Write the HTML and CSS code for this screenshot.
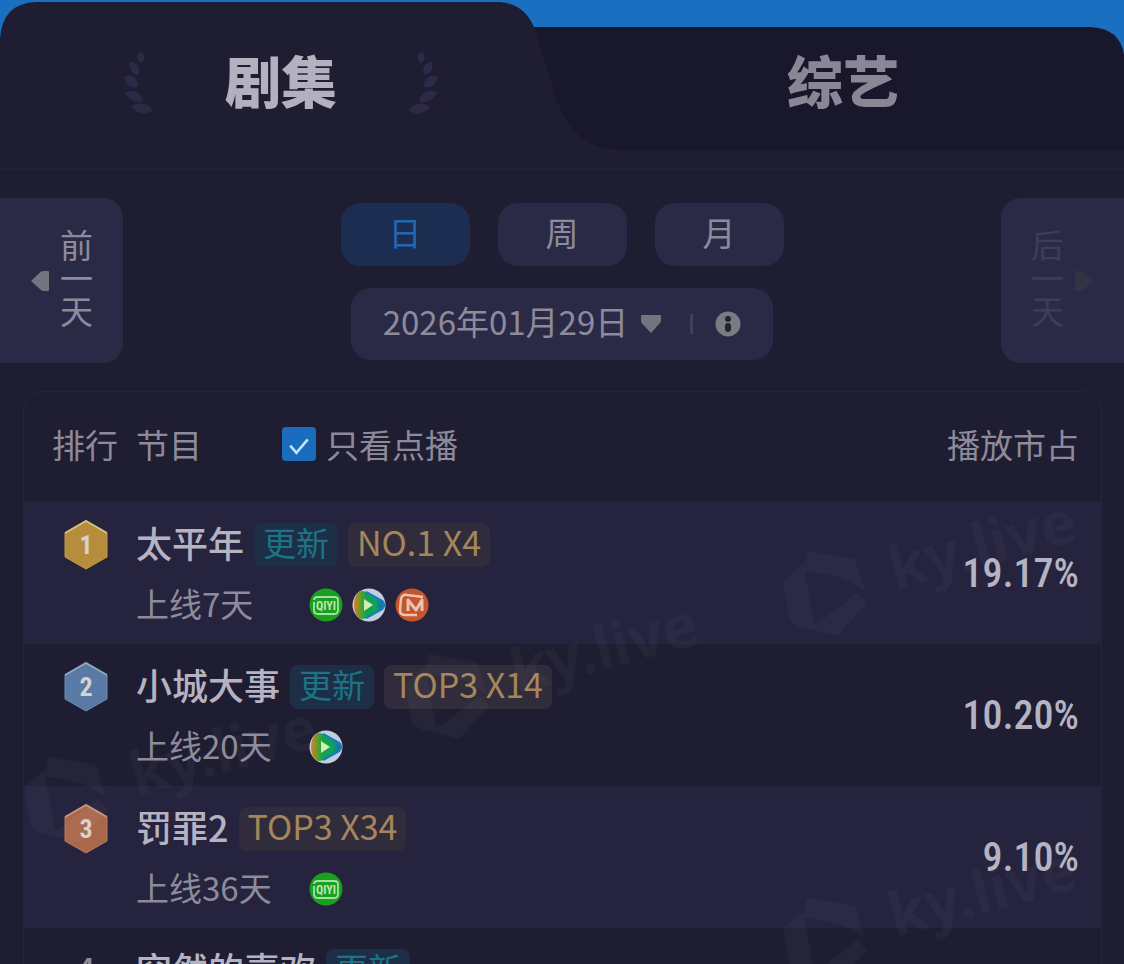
FILE: index.html
```html
<!DOCTYPE html>
<html lang="zh-CN">
<head>
  <meta charset="UTF-8">
  <meta name="viewport" content="width=device-width, initial-scale=1.0">
  <title>播放市占</title>
  <link rel="stylesheet" href="styles.css">
</head>
<body>

  <!-- Shared icons -->
  <svg class="sprite" aria-hidden="true">
    <defs>
      <linearGradient id="playFill" x1="0" x2="1" y1="0" y2="0">
        <stop offset="0" stop-color="#e07a20"/>
        <stop offset="0.22" stop-color="#5f9f2a"/>
        <stop offset="0.4" stop-color="#12a24a"/>
        <stop offset="0.7" stop-color="#12a25a"/>
        <stop offset="1" stop-color="#1668b4"/>
      </linearGradient>
    </defs>
    <symbol id="laurel" viewBox="0 0 32 66">
      <g fill="#2c2a47">
        <path d="M0-6Q6-3 4 2Q3 6 1 6Q-6 2 0-6Z" transform="translate(17 8)"/>
        <path d="M-1-8Q7-4 4 3Q3 7 1 7Q-7 1-1-8Z" transform="translate(11 20) rotate(-22)"/>
        <path d="M-1-9Q8-4 5 4Q3 8 1 8Q-8 2-1-9Z" transform="translate(8 33) rotate(-44)"/>
        <path d="M-1-10Q8-4 5 4Q3 9 1 10Q-8 3-1-10Z" transform="translate(11 48) rotate(-60)"/>
        <path d="M-1-11Q8-4 5 5Q3 10 1 11Q-8 3-1-11Z" transform="translate(19 60) rotate(-74)"/>
      </g>
    </symbol>
    <symbol id="iqiyi" viewBox="0 0 34 34">
      <circle cx="17" cy="17" r="16.5" fill="#1aa01f"/>
      <path d="M5 12Q5 9 9 9H25Q29 9 29 12V22Q29 26 25 26H9Q5 26 5 22M5 14V22" fill="none" stroke="#a5dfa3" stroke-width="1.8"/>
      <text class="iqiyi-text" x="17" y="22">QIYI</text>
    </symbol>
    <symbol id="tencent" viewBox="0 0 34 34">
      <circle cx="17" cy="17" r="16.5" fill="#c3cfdf"/>
      <path d="M7 4Q10 2 14 4L30 13Q34 17 30 21L14 30Q10 32 7 30Q2 26 2 17Q2 8 7 4Z" fill="url(#playFill)"/>
      <path d="M14 4L30 13Q34 17 30 21L14 30" fill="none" stroke="#187cc0" stroke-width="2.5"/>
      <path d="M12 11L21 17L12 23Z" fill="#d3ecb0"/>
    </symbol>
    <symbol id="mango" viewBox="0 0 34 34">
      <circle cx="17" cy="17" r="16.5" fill="#c4562a"/>
      <path d="M28 9L12 7Q7 6 6 11L5 22Q5 27 10 27H22" fill="none" stroke="#e9c4b4" stroke-width="2.5"/>
      <path d="M13 23V12L21 22L27 12V23" fill="none" stroke="#e9c4b4" stroke-width="3" stroke-linejoin="round"/>
    </symbol>
    <symbol id="watermark" viewBox="0 0 310 130" overflow="visible">
      <path d="M24 35L72 43L82 75L60 62L20 54Z"/>
      <path d="M20 48L0 65L7 105L18 112L31 108L22 58Z"/>
      <path d="M74 77L84 87L54 120L20 111L37 106L70 80Z"/>
      <text x="112" y="74" transform="rotate(-15 112 74)">ky.live</text>
    </symbol>
  </svg>

  <header class="tabs">
    <svg class="tabs-bg" viewBox="0 0 1124 168" preserveAspectRatio="none" aria-hidden="true">
      <path d="M500 27H1090Q1120 28 1124 55V160H500Z" fill="#19172b"/>
      <path d="M0 38Q3 3 36 2H500Q524 4 534 27L557 101Q573 149 622 150H1124V168H0Z" fill="#1f1d31"/>
    </svg>
    <button class="tab active">
      <svg class="laurel" aria-hidden="true"><use href="#laurel"/></svg>
      <span>剧集</span>
      <svg class="laurel flip" aria-hidden="true"><use href="#laurel"/></svg>
    </button>
    <button class="tab"><span>综艺</span></button>
  </header>

  <main>
    <section class="controls">
      <button class="day prev">
        <svg width="20" height="22" viewBox="0 0 20 22" aria-hidden="true"><path d="M1 11L11 1.5Q12 1 14 1H18Q19 1 19 2V20Q19 21 18 21H14Q12 21 11 20Z" fill="#74747f"/></svg>
        <span>前一天</span>
      </button>

      <div class="picker">
        <div class="periods">
          <button class="period selected">日</button>
          <button class="period">周</button>
          <button class="period">月</button>
        </div>
        <div class="date-bar">
          <button class="date">
            <span>2026年01月29日</span>
            <svg width="22" height="20" viewBox="0 0 22 20" aria-hidden="true"><path d="M11 19L1.5 9Q1 8 1 6V2Q1 1 2 1H20Q21 1 21 2V6Q21 8 20 9Z" fill="#74747f"/></svg>
          </button>
          <span class="divider"></span>
          <button class="info" aria-label="说明">
            <svg width="26" height="26" viewBox="0 0 26 26" aria-hidden="true"><circle cx="13" cy="13" r="12.5" fill="#7b7b82"/><circle cx="13" cy="8" r="3" fill="#24242c"/><rect x="10" y="12" width="6" height="9" rx="3" fill="#24242c"/></svg>
          </button>
        </div>
      </div>

      <button class="day next" disabled>
        <span>后一天</span>
        <svg width="20" height="22" viewBox="0 0 20 22" aria-hidden="true"><path d="M19 11L9 1.5Q8 1 6 1H2Q1 1 1 2V20Q1 21 2 21H6Q8 21 9 20Z" fill="#323344"/></svg>
      </button>
    </section>

    <section class="board">
      <table>
        <thead>
          <tr>
            <th class="rank">排行</th>
            <th class="show">
              <div class="show-head">
                <span>节目</span>
                <label class="only"><input type="checkbox" checked><span>只看点播</span></label>
              </div>
            </th>
            <th class="share">播放市占</th>
          </tr>
        </thead>
        <tbody>
          <tr>
            <td class="rank">
              <svg class="badge" viewBox="0 0 44 50"><path d="M22 1L43 13V37L22 49L1 37V13Z" fill="#b58d3c" stroke="#c39c4a" stroke-width="1"/><path d="M1 13L22 1L43 13" fill="none" stroke="#d8c080" stroke-width="2"/><text x="22" y="34">1</text></svg>
            </td>
            <td class="show">
              <div class="title"><span class="name">太平年</span><span class="tag new">更新</span><span class="tag top">NO.1 X4</span></div>
              <div class="meta"><span class="days">上线7天</span><svg class="site"><use href="#iqiyi"/></svg><svg class="site"><use href="#tencent"/></svg><svg class="site"><use href="#mango"/></svg></div>
            </td>
            <td class="share">19.17%</td>
          </tr>
          <tr>
            <td class="rank">
              <svg class="badge" viewBox="0 0 44 50"><path d="M22 1L43 13V37L22 49L1 37V13Z" fill="#587aa5" stroke="#6c8db5" stroke-width="1"/><path d="M1 13L22 1L43 13" fill="none" stroke="#8fa6c4" stroke-width="2"/><text x="22" y="34">2</text></svg>
            </td>
            <td class="show">
              <div class="title"><span class="name">小城大事</span><span class="tag new">更新</span><span class="tag top">TOP3 X14</span></div>
              <div class="meta"><span class="days">上线20天</span><svg class="site"><use href="#tencent"/></svg></div>
            </td>
            <td class="share">10.20%</td>
          </tr>
          <tr>
            <td class="rank">
              <svg class="badge" viewBox="0 0 44 50"><path d="M22 1L43 13V37L22 49L1 37V13Z" fill="#a9684c" stroke="#b97b5d" stroke-width="1"/><path d="M1 13L22 1L43 13" fill="none" stroke="#c8937a" stroke-width="2"/><text x="22" y="34">3</text></svg>
            </td>
            <td class="show">
              <div class="title"><span class="name">罚罪2</span><span class="tag top">TOP3 X34</span></div>
              <div class="meta"><span class="days">上线36天</span><svg class="site"><use href="#iqiyi"/></svg></div>
            </td>
            <td class="share">9.10%</td>
          </tr>
          <tr>
            <td class="rank"><span class="number">4</span></td>
            <td class="show">
              <div class="title"><span class="name">突然的喜欢</span><span class="tag new">更新</span></div>
              <div class="meta"></div>
            </td>
            <td class="share"></td>
          </tr>
        </tbody>
      </table>

      <svg class="marks" aria-hidden="true">
        <use href="#watermark" x="0" y="330" width="310" height="130"/>
        <use href="#watermark" x="381" y="227" width="310" height="130"/>
        <use href="#watermark" x="759" y="124" width="310" height="130"/>
        <use href="#watermark" x="759" y="471" width="310" height="130"/>
      </svg>
    </section>
  </main>

</body>
</html>
```

FILE: styles.css
```css
* {
  box-sizing: border-box;
}

body {
  font-family: "Noto Sans CJK SC", sans-serif;
  font-size: 33px;
  margin: 0;
  height: 100vh;
  overflow: hidden;
  background-color: #1f1d31;
  color: #8d8b9b;
}

button {
  font: inherit;
  color: inherit;
  background: none;
  border: none;
  padding: 0;
  cursor: pointer;
}

.sprite {
  position: absolute;
  width: 0;
  height: 0;
}

/* Tabs */
.tabs {
  position: relative;
  display: grid;
  grid-template-columns: 1fr 1fr;
  height: 169px;
  background-color: #1a6fc0;
  border-bottom: 1px solid #242239;
}

.tabs-bg {
  position: absolute;
  top: 0;
  left: 0;
  width: 100%;
  height: 100%;
}

.tab {
  position: relative;
  display: flex;
  align-items: center;
  justify-content: center;
  gap: 70px;
  padding-bottom: 4px;
  font-size: 56px;
  font-weight: 900;
  line-height: 64px;
  color: #898796;
}

.tab span {
  padding-bottom: 6px;
}

.tab.active {
  color: #b3b1bf;
}

.laurel {
  width: 32px;
  height: 66px;
}

.laurel.flip {
  transform: scaleX(-1);
}

/* Day, period and date controls */
.controls {
  display: flex;
  justify-content: space-between;
  align-items: flex-start;
  padding-top: 29px;
}

.day {
  display: flex;
  align-items: center;
  gap: 10px;
  width: 123px;
  height: 165px;
  padding: 0 30px;
  background-color: #2b2a46;
}

.day span {
  width: 33px;
  padding-bottom: 6px;
  line-height: 33px;
}

.day svg {
  flex: none;
}

.prev {
  border-radius: 0 20px 20px 0;
}

.next {
  border-radius: 20px 0 0 20px;
  color: #3e3c58;
}

.picker {
  display: flex;
  flex-direction: column;
  align-items: center;
  gap: 22px;
  padding-top: 5px;
}

.periods {
  display: flex;
  gap: 28px;
}

.period {
  width: 129px;
  height: 63px;
  padding-bottom: 6px;
  border-radius: 20px;
  background-color: #2b2a46;
  line-height: 56px;
}

.period.selected {
  background-color: #1d2d52;
  color: #2068b0;
}

.date-bar {
  display: flex;
  align-items: center;
  height: 72px;
  padding: 0 32px;
  border-radius: 20px;
  background-color: #2b2a46;
}

.date {
  display: flex;
  align-items: center;
  gap: 12px;
  line-height: 44px;
}

.date span {
  padding-bottom: 6px;
}

.divider {
  width: 3px;
  height: 20px;
  margin: 0 22px 0 28px;
  background-color: #403f5a;
}

.info {
  display: flex;
}

/* Ranking */
.board {
  position: relative;
  margin: 28px 22px 0 23px;
  border: 1px solid #262439;
  border-radius: 20px;
  overflow: hidden;
}

table {
  width: 100%;
  border-collapse: collapse;
}

th {
  height: 110px;
  padding: 0 0 6px;
  font-weight: 400;
  text-align: left;
}

td {
  height: 142px;
  padding: 21px 0 0;
  vertical-align: top;
}

tbody tr:nth-child(odd) {
  background-color: #25233e;
}

th.rank {
  width: 112px;
  padding-left: 28px;
}

td.rank {
  padding: 18px 0 0 40px;
}

.badge {
  display: block;
  width: 44px;
  height: 50px;
}

.badge text {
  font: bold 26px "Roboto Condensed", Roboto, sans-serif;
  fill: #d6d2d0;
  text-anchor: middle;
}

.iqiyi-text {
  font: bold 12px "Roboto Condensed", Roboto, sans-serif;
  fill: #b9e6b5;
  text-anchor: middle;
}

.number {
  display: block;
  width: 44px;
  font-size: 33px;
  font-weight: 500;
  line-height: 44px;
  text-align: center;
}

.show-head {
  display: flex;
  align-items: center;
  gap: 80px;
}

.only {
  display: flex;
  align-items: center;
  gap: 10px;
}

.only input {
  appearance: none;
  width: 34px;
  height: 34px;
  margin: 0;
  border-radius: 4px;
  background: #1a6dbc url("data:image/svg+xml,%3Csvg xmlns='http://www.w3.org/2000/svg' viewBox='0 0 33 33'%3E%3Cpath d='M8 18l6 7 11-13' fill='none' stroke='%23c5e4ff' stroke-width='2.5'/%3E%3C/svg%3E");
}

.title {
  display: flex;
  align-items: center;
  gap: 10px;
  height: 44px;
}

.name {
  padding-bottom: 6px;
  font-size: 36px;
  font-weight: 500;
  line-height: 44px;
  color: #b5b3c2;
}

.tag {
  height: 44px;
  padding: 0 9px;
  border-radius: 8px;
  line-height: 38px;
}

.tag.new {
  background-color: #1d2f47;
  color: #1c7386;
}

.tag.top {
  background-color: #312c3c;
  font-size: 34px;
  color: #a4865a;
}

.meta {
  display: flex;
  align-items: center;
  gap: 9px;
  height: 44px;
  margin-top: 16px;
}

.days {
  width: 164px;
  padding-bottom: 4px;
  line-height: 44px;
}

.site {
  width: 34px;
  height: 34px;
}

.share {
  padding-right: 22px;
  text-align: right;
}

td.share {
  padding-top: 0;
  font-family: "Roboto Condensed", Roboto, sans-serif;
  font-size: 40px;
  font-weight: 500;
  vertical-align: middle;
  color: #b5b3c2;
}

.marks {
  position: absolute;
  top: 0;
  left: 0;
  width: 100%;
  height: 100%;
  pointer-events: none;
  fill: #ffffff;
  fill-opacity: 0.03;
  font: bold 60px "Noto Sans", sans-serif;
}
```
